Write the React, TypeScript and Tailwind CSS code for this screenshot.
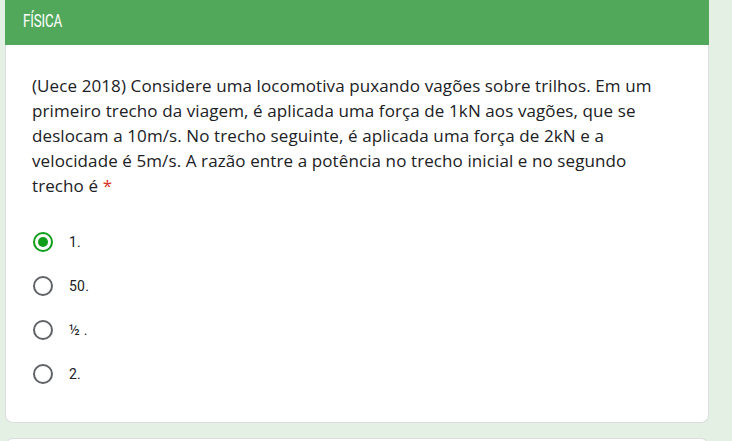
const options = ["1.", "50.", "½ .", "2."];

function Radio({ checked }: { checked: boolean }) {
  return (
    <div
      className={`w-5 h-5 rounded-full border-2 flex items-center justify-center ${
        checked ? "border-[#0f9d1a]" : "border-[#5f6368]"
      }`}
    >
      {checked && <div className="w-[10px] h-[10px] rounded-full bg-[#0f9d1a]" />}
    </div>
  );
}

export default function App() {
  return (
    <div className="min-h-[441px] w-[732px] bg-[#e3f0e3] pl-[5px] pr-[23px] overflow-hidden font-['Roboto',sans-serif]">
      <div className="bg-white border border-t-0 border-[#dadce0] rounded-b-lg">
        <div className="h-[45px] bg-[#51a85b] px-[18px] pt-[7px] -mx-px">
          <span className="inline-block origin-left scale-x-[0.74] text-white text-[18px] tracking-[-0.2px]">
            FÍSICA
          </span>
        </div>
        <div className="px-[26px] pt-[28px] pb-[38px]">
          <p className="text-[#202124] text-[17px] leading-[25px] font-['Open_Sans',sans-serif] tracking-[0.1px] whitespace-nowrap">
            (Uece 2018) Considere uma locomotiva puxando vagões sobre trilhos. Em um
            <br />
            primeiro trecho da viagem, é aplicada uma força de 1kN aos vagões, que se
            <br />
            deslocam a 10m/s. No trecho seguinte, é aplicada uma força de 2kN e a
            <br />
            velocidade é 5m/s. A razão entre a potência no trecho inicial e no segundo
            <br />
            trecho é <span className="text-[#d93025]">*</span>
          </p>
          <div className="mt-[34px] flex flex-col gap-[24px]">
            {options.map((o, i) => (
              <div key={o} className="flex items-center h-5 pl-[1px]">
                <Radio checked={i === 0} />
                <span className="ml-[16px] text-[14px] text-[#202124] tracking-[0.2px]">{o}</span>
              </div>
            ))}
          </div>
        </div>
      </div>
      <div className="mt-[15px] h-[20px] bg-white border border-[#dadce0] rounded-t-lg" />
    </div>
  );
}
